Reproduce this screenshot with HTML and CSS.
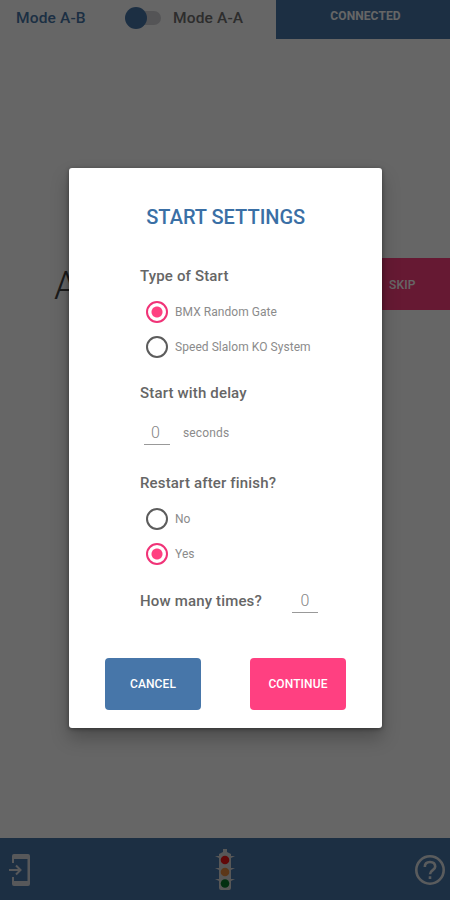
FILE: index.html
```html
<!DOCTYPE html>
<html lang="en">
<head>
<meta charset="utf-8">
<title>Start settings</title>
<link rel="stylesheet" href="styles.css">
</head>
<body>
<div class="app">
  <header class="topbar">
    <div class="modes">
      <span class="mode mode-on">Mode A-B</span>
      <span class="switch"><span class="thumb"></span></span>
      <span class="mode">Mode A-A</span>
    </div>
    <div class="connected">CONNECTED</div>
  </header>
  <main class="athlete">
    <span class="athlete-name">A</span>
    <div class="skip">SKIP</div>
  </main>
  <footer class="bottombar">
    <svg class="icon-login" viewBox="0 0 22 34" width="22" height="34">
      <path d="M3 10V3q0-2 2-2h14q2 0 2 2v28q0 2-2 2H5q-2 0-2-2v-7h2v4h13.500V6H5v4z" fill="#d9dde2"/>
      <path d="M0 17h11M7 12.500l4.500 4.500-4.500 4.500" fill="none" stroke="#d9dde2" stroke-width="2"/>
    </svg>
    <svg class="icon-light" viewBox="0 0 22 44" width="22" height="44">
      <path d="M9 1h4v3l4 2v34q0 2-2 2H7q-2 0-2-2V6l4-2z" fill="#d9d9d9"/>
      <path d="M1 8h20l-4 2H5zM1 20h20l-4 2H5zM1 31h20l-4 2H5z" fill="#d9d9d9"/>
      <circle cx="11" cy="12" r="4.300" fill="#f01414"/>
      <circle cx="11" cy="24" r="4.300" fill="#e58a40"/>
      <circle cx="11" cy="35.500" r="4.300" fill="#08782c"/>
    </svg>
    <svg class="icon-help" viewBox="0 0 32 32" width="32" height="32" fill="none" stroke="#e2e5e9" stroke-width="2.600">
      <circle cx="16" cy="16" r="13.700"/>
      <path d="M10.800 13q0-5 5.200-5t5.200 4.700c0 3.400-5.200 3.500-5.200 7.500M16 22.300v2.700"/>
    </svg>
  </footer>
</div>
<div class="scrim">
  <section class="dialog">
    <h1>START SETTINGS</h1>
    <div class="form">
      <h2>Type of Start</h2>
      <div class="option"><span class="radio checked"></span>BMX Random Gate</div>
      <div class="option"><span class="radio"></span>Speed Slalom KO System</div>
      <h2 class="delay-title">Start with delay</h2>
      <div class="delay"><span class="number">0</span>seconds</div>
      <h2 class="restart-title">Restart after finish?</h2>
      <div class="option"><span class="radio"></span>No</div>
      <div class="option"><span class="radio checked"></span>Yes</div>
      <div class="times"><h2>How many times?</h2><span class="number">0</span></div>
    </div>
    <div class="actions">
      <div class="button cancel">CANCEL</div>
      <div class="button continue">CONTINUE</div>
    </div>
  </section>
</div>
</body>
</html>
```
FILE: styles.css
```css
* { box-sizing: border-box; }
body { margin: 0; font-family: Roboto, sans-serif; background: #fff; }
.app { height: 900px; display: flex; flex-direction: column; }
.topbar { height: 39px; display: flex; }
.modes { width: 276px; display: flex; align-items: center; padding: 0 0 3px 16px; }
.mode { font-size: 15.500px; font-weight: 500; letter-spacing: .15px; color: #707070; white-space: nowrap; }
.mode-on { width: 109px; color: #4776a9; }
.switch { width: 36px; height: 14px; border-radius: 7px; background: linear-gradient(90deg, transparent 10px, #d2d2d7 10px); display: flex; align-items: center; margin-right: 12px; }
.thumb { width: 22px; height: 22px; flex: none; border-radius: 50%; background: #4776a9; }
.connected { flex: 1; background: #4776a9; color: #fff; font-size: 12px; font-weight: 700; letter-spacing: .1px; line-height: 33px; text-align: center; padding-left: 5px; }
.athlete { flex: 1; display: flex; justify-content: space-between; align-items: flex-start; padding: 219px 0 0 54px; }
.athlete-name { font-size: 38px; font-weight: 300; line-height: 56px; color: #444; }
.skip { width: 95px; height: 52px; background: #ff4081; color: #fff; font-size: 12px; font-weight: 500; letter-spacing: .2px; line-height: 54px; padding-left: 34px; }
.bottombar { height: 62px; background: #4776a9; display: grid; grid-template-columns: 205px 22px 1fr; align-items: center; padding: 2px 4px 0 9px; }
.icon-login, .icon-light { display: block; }
.icon-help { justify-self: end; }

.scrim { position: absolute; inset: 0; height: 900px; background: rgba(0,0,0,.6); padding: 168px 69px 0; }
.dialog { width: 312.500px; height: 559.500px; background: #fff; border-radius: 3px; box-shadow: 0 10px 18px rgba(0,0,0,.25), 0 1px 4px rgba(0,0,0,.4); padding-top: 37px; }
h1 { margin: 0; padding-left: 1px; text-align: center; font-size: 20px; line-height: 24px; font-weight: 500; color: #3a6fa5; }
.form { height: 387px; padding: 37px 0 0 71px; }
h2 { margin: 0; font-size: 15px; line-height: 20px; font-weight: 500; letter-spacing: .16px; color: #666; }
.form > h2:first-child { margin-bottom: 8px; }
.option { height: 35px; display: flex; align-items: center; gap: 7px; padding-left: 6px; font-size: 12px; letter-spacing: .05px; color: #8b8b8b; }
.radio { width: 22px; height: 22px; border: 2px solid #5c5c5c; border-radius: 50%; }
.radio.checked { border-color: #f03377; background: radial-gradient(circle, #ff4081 5px, transparent 6px); }
.delay-title { margin-top: 19px; }
.delay { display: flex; align-items: center; gap: 13px; margin: 17px 0 0 4px; font-size: 12px; letter-spacing: .15px; color: #8b8b8b; }
.number { width: 26px; height: 25px; border-bottom: 1px solid #999; text-align: center; padding-right: 3px; font-size: 16px; line-height: 26px; font-weight: 300; color: #858585; }
.restart-title { margin: 28px 0 8px; }
.times { display: flex; align-items: center; margin-top: 17px; }
.times h2 { width: 152px; }
.times .number { height: 25px; padding: 0; }
.actions { display: flex; gap: 49px; padding: 41.500px 0 0 36px; }
.button { width: 96px; height: 52px; border-radius: 4px; text-align: center; line-height: 53px; font-size: 12px; font-weight: 500; letter-spacing: .1px; color: #fff; }
.cancel { background: #4776a9; }
.continue { background: #ff4081; }
```
